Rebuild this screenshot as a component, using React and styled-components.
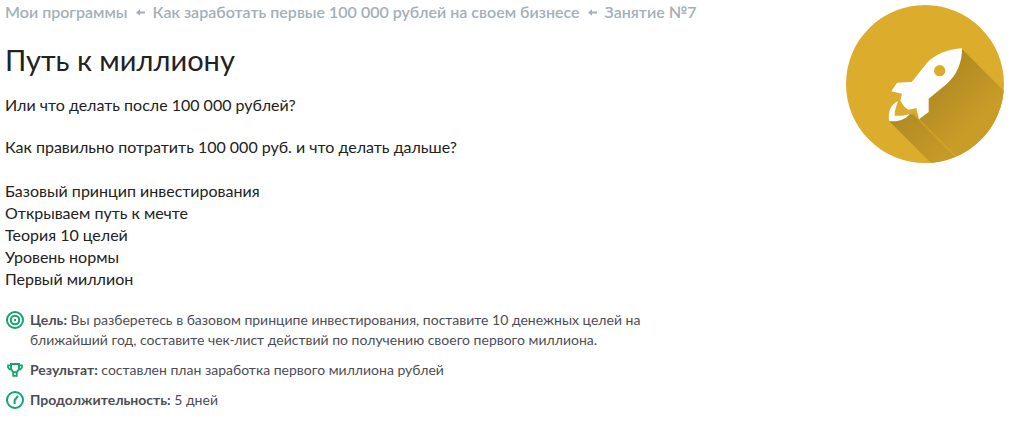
import React from 'react'
import styled, { createGlobalStyle } from 'styled-components'

const GlobalStyle = createGlobalStyle`
body {
  margin: 0;
  background: #fff;
  font-family: 'Lato', 'Roboto', sans-serif;
}
`

const Page = styled.main`
display: flex;
justify-content: space-between;
align-items: flex-start;
padding: 0 7px 0 5px;
color: #222;
`

const Content = styled.div`
flex: 1;
`

const Crumbs = styled.nav`
display: flex;
align-items: center;
line-height: 24px;
font-size: 16px;
font-weight: 600;
color: #a3afb7;
`

const CrumbLink = styled.a`
color: inherit;
text-decoration: none;
`

const CrumbArrow = styled.svg`
width: 9px;
height: 7px;
margin: 0 8px;
fill: currentColor;
`

const Title = styled.h1`
margin: 20px 0 18px;
font-size: 29px;
line-height: 32px;
font-weight: 400;
`

const Text = styled.p`
margin: 0 0 20px;
font-size: 16px;
line-height: 22px;
`

const Topics = styled.ul`
list-style: none;
margin: 22px 0 20px;
padding: 0;
font-size: 16px;
line-height: 22px;
`

const Details = styled.ul`
list-style: none;
margin: 0;
padding: 0;
max-width: 640px;
font-size: 14px;
line-height: 20px;
color: #4d4d55;
`

const Detail = styled.li`
display: flex;
gap: 5px;
margin-bottom: 10px;
`

const DetailIcon = styled.svg`
flex: none;
width: 20px;
height: 20px;
fill: none;
stroke: #12a56c;
stroke-width: 2;
`

const Badge = styled.svg`
flex: none;
width: 158px;
height: 158px;
margin-top: 5px;
`

const Arrow = () => (
    <CrumbArrow viewBox='0 0 9 7' aria-hidden='true'>
        <path d='M0 3.5 4 0.2V2.4H9V4.6H4V6.8Z' />
    </CrumbArrow>
)

const TargetIcon = () => (
    <DetailIcon viewBox='0 0 20 20' aria-hidden='true'>
        <circle cx='10' cy='10' r='8' />
        <circle cx='10' cy='10' r='4.2' />
        <circle cx='10' cy='10' r='1.2' fill='#12a56c' stroke='none' />
    </DetailIcon>
)

const CupIcon = () => (
    <DetailIcon viewBox='0 0 20 20' aria-hidden='true'>
        <path d='M6 4H14V9L11.6 12.2H8.4L6 9Z' strokeWidth='1.9' />
        <path d='M6 5.4H3V7.4L4.6 9.4H6.6M14 5.4H17V7.4L15.4 9.4H13.4' strokeWidth='1.7' />
        <path d='M8.2 12.6V15.8H11.8V12.6' strokeWidth='1.7' />
    </DetailIcon>
)

const ClockIcon = () => (
    <DetailIcon viewBox='0 0 20 20' aria-hidden='true'>
        <circle cx='10' cy='10' r='8' />
        <path d='M9.6 14V10.2L13 6' />
    </DetailIcon>
)

const Rocket = () => (
    <Badge viewBox='18 14 474 474' role='img' aria-label='Ракета'>
        <defs>
            <clipPath id='disc'>
                <circle cx='255' cy='251' r='237' />
            </clipPath>
            <linearGradient id='shade' gradientUnits='userSpaceOnUse' x1='280' y1='250' x2='405' y2='375'>
                <stop offset='0' stopColor='#b08a22' />
                <stop offset='1' stopColor='#c99c28' />
            </linearGradient>
            <linearGradient id='shadeFlame' gradientUnits='userSpaceOnUse' x1='170' y1='345' x2='300' y2='475'>
                <stop offset='0' stopColor='#b08a22' />
                <stop offset='1' stopColor='#c69a28' />
            </linearGradient>
        </defs>
        <circle cx='255' cy='251' r='237' fill='#dcac2c' />
        <g clipPath='url(#disc)'>
            <path d='M366 146 566 346V557H438L238 357 266 295Z' fill='url(#shade)' />
            <path d='M147 362 208 340 226 344 439 557H342Z' fill='url(#shadeFlame)' />
            <path d='M216 338 226 336 238 357 438 557H431Z' fill='#d5a62b' />
        </g>
        <path
            d='M366 144C323 147 283 162 259 190L215 245 171 247 154 273 186 280 181 301C188 315 195 323 205 328L229 323 237 357 266 335V295L320 251C351 224 367 184 366 144Z'
            fill='#fff'
        />
        <circle cx='299' cy='211' r='17' fill='#dcac2c' />
        <path d='M182 302 166 342 210 341 216 335 205 328C195 323 188 315 182 302Z' fill='#dcac2c' />
        <path d='M174 303C149 315 145 335 147 362 174 365 199 357 209 340 193 346 178 347 164 346 164 331 168 318 174 303Z' fill='#fff' />
    </Badge>
)

const App = () => {
    return (
        <>
            <GlobalStyle />
            <Page>
                <Content>
                    <Crumbs>
                        <CrumbLink href='#programs'>Мои программы</CrumbLink>
                        <Arrow />
                        <CrumbLink href='#course'>Как заработать первые 100 000 рублей на своем бизнесе</CrumbLink>
                        <Arrow />
                        <span>Занятие №7</span>
                    </Crumbs>
                    <Title>Путь к миллиону</Title>
                    <Text>Или что делать после 100 000 рублей?</Text>
                    <Text>Как правильно потратить 100 000 руб. и что делать дальше?</Text>
                    <Topics>
                        <li>Базовый принцип инвестирования</li>
                        <li>Открываем путь к мечте</li>
                        <li>Теория 10 целей</li>
                        <li>Уровень нормы</li>
                        <li>Первый миллион</li>
                    </Topics>
                    <Details>
                        <Detail>
                            <TargetIcon />
                            <span><b>Цель:</b> Вы разберетесь в базовом принципе инвестирования, поставите 10 денежных целей на ближайший год, составите чек-лист действий по получению своего первого миллиона.</span>
                        </Detail>
                        <Detail>
                            <CupIcon />
                            <span><b>Результат:</b> составлен план заработка первого миллиона рублей</span>
                        </Detail>
                        <Detail>
                            <ClockIcon />
                            <span><b>Продолжительность:</b> 5 дней</span>
                        </Detail>
                    </Details>
                </Content>
                <Rocket />
            </Page>
        </>
    )
}

export default App
